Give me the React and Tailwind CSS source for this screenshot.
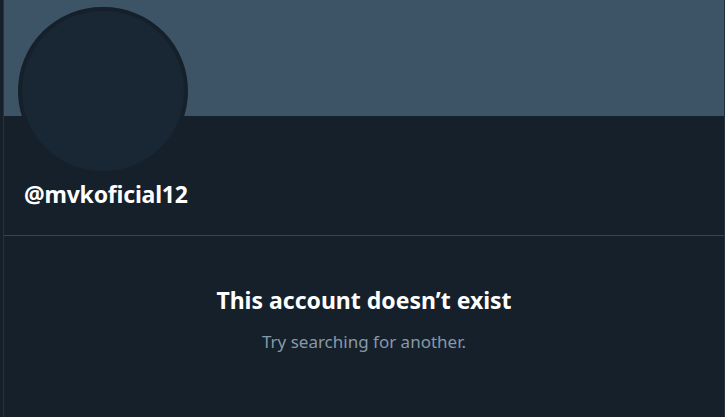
export default function App() {
  return (
    <div className="h-[417px] w-[725px] overflow-hidden bg-[#15202b] pl-[3px]" style={{ fontFamily: '"Noto Sans", "Open Sans", sans-serif' }}>
      <div className="h-full border-l border-r border-[#253341]">
        <div className="relative">
          <div className="h-[116px] bg-[#3d5466]" />
          <div className="absolute left-[14px] top-[7px] h-[168px] w-[170px] rounded-full border-4 border-[#15202b] bg-[#192734]" />
        </div>
        <div className="flex h-[120px] items-end border-b border-[#38444d] pb-[29px] pl-[20px]">
          <span className="text-[23px] font-bold leading-none tracking-[-0.2px] text-white">@mvkoficial12</span>
        </div>
        <div className="flex flex-col items-center pt-[49px]">
          <h2 className="text-[23px] font-bold leading-[30px] text-white">This account doesn’t exist</h2>
          <p className="mt-[17px] text-[17px] leading-5 text-[#8899a6]">Try searching for another.</p>
        </div>
      </div>
    </div>
  );
}
